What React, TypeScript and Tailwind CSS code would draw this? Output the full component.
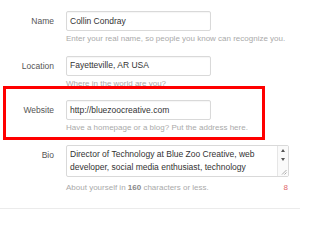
export default function App() {
  const rows = [
    {
      label: 'Name',
      value: 'Collin Condray',
      hint: 'Enter your real name, so people you know can recognize you.',
    },
    {
      label: 'Location',
      value: 'Fayetteville, AR USA',
      hint: 'Where in the world are you?',
    },
    {
      label: 'Website',
      value: 'http://bluezoocreative.com',
      hint: 'Have a homepage or a blog? Put the address here.',
    },
  ]

  return (
    <div className="relative h-[215px] w-[300px] overflow-hidden bg-white font-['Liberation_Sans',Arial,sans-serif]">
      <div className="grid grid-cols-[54px_1fr] gap-x-[12px] gap-y-[11.5px] pt-[11px]">
        {rows.map((r) => (
          <div key={r.label} className="contents">
            <div className="pt-[5px] text-right text-[8.5px] leading-[10px] text-[#555]">
              {r.label}
            </div>
            <div>
              <div className="flex h-[20px] w-[145px] items-center rounded-[2px] border border-[#d9d9d9] px-[3px] text-[8.5px] text-[#333] shadow-[inset_0_1px_1px_rgba(0,0,0,0.04)]">
                {r.value}
              </div>
              <p className="mt-[3px] text-[8px] leading-[10px] text-[#aaa]">{r.hint}</p>
            </div>
          </div>
        ))}

        {/* Bio */}
        <div className="pt-[5px] text-right text-[8.5px] leading-[10px] text-[#555]">Bio</div>
        <div className="w-[223px]">
          <div className="flex h-[32px] rounded-[2px] border border-[#d9d9d9]">
            <p className="flex-1 px-[3px] pt-[2px] text-[8.5px] leading-[13px] text-[#333]">
              Director of Technology at Blue Zoo Creative, web developer, social media enthusiast, technology
            </p>
            <div className="relative flex w-[11px] flex-col items-center border-l border-[#e6e6e6] bg-[#fafafa]">
              <div className="mt-[3px] h-0 w-0 border-x-[2.5px] border-b-[3px] border-x-transparent border-b-[#555]" />
              <div className="mt-[6px] h-0 w-0 border-x-[2.5px] border-t-[3px] border-x-transparent border-t-[#555]" />
              <svg className="absolute bottom-[1px] right-[1px]" width="6" height="6" viewBox="0 0 6 6">
                <path d="M1 5.5L5.5 1M3.5 5.5L5.5 3.5" stroke="#999" strokeWidth="0.8" />
              </svg>
            </div>
          </div>
          <div className="mt-[6px] flex justify-between text-[8px] leading-[10px]">
            <p className="text-[#aaa]">
              About yourself in <span className="font-bold text-[#888]">160</span> characters or less.
            </p>
            <span className="pr-[1px] text-[#e0646a]">8</span>
          </div>
        </div>
      </div>

      <div className="absolute left-0 right-0 top-[208px] h-px bg-[#ebebeb]" />

      {/* highlight annotation */}
      <div className="pointer-events-none absolute left-[3px] top-[86px] h-[54px] w-[262px] border-[3px] border-[#ff0000]" />
    </div>
  )
}
